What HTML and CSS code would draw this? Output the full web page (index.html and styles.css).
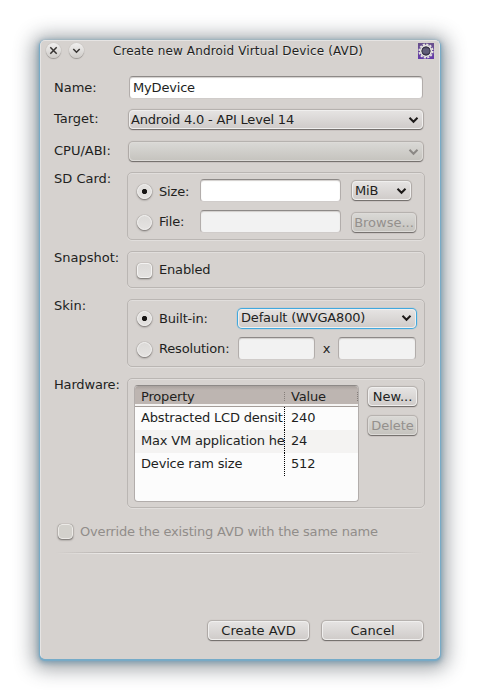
FILE: index.html
```html
<!DOCTYPE html>
<html lang="en">
<head>
<meta charset="utf-8">
<title>Create new Android Virtual Device (AVD)</title>
<link rel="stylesheet" href="styles.css">
</head>
<body>
<main class="dialog">
  <header class="titlebar">
    <span class="round"><svg width="15" height="15" viewBox="0 0 15 15"><path d="M4.3 4.3l6.4 6.4M10.7 4.3l-6.4 6.4"/></svg></span>
    <span class="round"><svg width="15" height="15" viewBox="0 0 15 15"><path d="M4.3 6l3.2 3.2L10.7 6"/></svg></span>
    <h1>Create new Android Virtual Device (AVD)</h1>
    <svg class="app" width="16" height="16" viewBox="0 0 16 16">
      <defs><linearGradient id="bg" x2="0" y2="1"><stop stop-color="#68518b"/><stop offset="1" stop-color="#653baa"/></linearGradient></defs>
      <rect width="16" height="16" fill="url(#bg)"/>
      <circle cx="8" cy="8" r="6.7" fill="none" stroke="#e4e2e0" stroke-width="1.8" stroke-dasharray="2.2 1.308"/>
      <circle cx="8" cy="8" r="5.3" fill="#3a364e" stroke="#e4e2e0" stroke-width="1.7"/>
      <circle cx="8" cy="8" r="4" fill="#57516f" stroke="#353144" stroke-width="1"/>
      <path d="M4.5 7h7M4.5 9h7" stroke="#77738e" stroke-width=".7"/>
    </svg>
  </header>
  <section class="form">
    <div class="row name"><label>Name:</label><div class="input">MyDevice</div></div>
    <div class="row target"><label>Target:</label><div class="button combo"><span>Android 4.0 - API Level 14</span><svg class="arrow" width="11" height="8" viewBox="0 0 11 8"><path d="M1.5 1.8l4 4 4-4"/></svg></div></div>
    <div class="row cpu"><label>CPU/ABI:</label><div class="button combo off"><span></span><svg class="arrow" width="11" height="8" viewBox="0 0 11 8"><path d="M1.5 1.8l4 4 4-4"/></svg></div></div>
    <div class="row sd"><label>SD Card:</label>
      <div class="group">
        <div class="line"><i class="radio on"></i><span class="opt">Size:</span><div class="input"></div><div class="button combo mib"><span>MiB</span><svg class="arrow" width="11" height="8" viewBox="0 0 11 8"><path d="M1.5 1.8l4 4 4-4"/></svg></div></div>
        <div class="line"><i class="radio"></i><span class="opt">File:</span><div class="input dim"></div><div class="button off browse">Browse...</div></div>
      </div>
    </div>
    <div class="row snap"><label>Snapshot:</label><div class="group"><i class="check"></i><span class="opt">Enabled</span></div></div>
    <div class="row skin"><label>Skin:</label>
      <div class="group">
        <div class="line"><i class="radio on"></i><span class="opt">Built-in:</span><div class="button combo focus"><span>Default (WVGA800)</span><svg class="arrow" width="11" height="8" viewBox="0 0 11 8"><path d="M1.5 1.8l4 4 4-4"/></svg></div></div>
        <div class="line"><i class="radio"></i><span class="opt">Resolution:</span><div class="input dim"></div><span class="times">x</span><div class="input dim wide"></div></div>
      </div>
    </div>
    <div class="row hw"><label>Hardware:</label>
      <div class="group">
        <div class="table">
          <div class="tr head"><span>Property</span><span>Value</span></div>
          <div class="tr"><span>Abstracted LCD densit</span><span>240</span></div>
          <div class="tr alt"><span>Max VM application he</span><span>24</span></div>
          <div class="tr"><span>Device ram size</span><span>512</span></div>
        </div>
        <div class="actions"><div class="button">New...</div><div class="button off">Delete</div></div>
      </div>
    </div>
    <div class="override"><i class="check dim"></i><span>Override the existing AVD with the same name</span></div>
    <div class="separator"></div>
    <footer><div class="button create">Create AVD</div><div class="button">Cancel</div></footer>
  </section>
</main>
</body>
</html>
```
FILE: styles.css
```css
* { box-sizing: border-box; }
body {
  margin: 0;
  padding: 40px;
  height: 699px;
  overflow: hidden;
  background: #fff;
  color: #221f1e;
  font: 13px/18px "DejaVu Sans", sans-serif;
  letter-spacing: -.18px;
  white-space: nowrap;
}
.dialog {
  width: 400px;
  height: 619px;
  background: #d6d2cf;
  border-radius: 5px;
  border: 1px solid #e6e4e3;
  border-bottom-color: #d6d2cf;
  box-shadow: 0 1px 1px 1px #76abc8, 0 2px 5px 2px rgba(100, 145, 172, .6), 0 3px 19px 7px rgba(55, 62, 72, .48);
}
.titlebar {
  display: flex;
  align-items: center;
  height: 20px;
  padding: 0 5px;
}
.round {
  width: 15px;
  height: 15px;
  margin: -2px 8px 0 0;
  border-radius: 50%;
  background: linear-gradient(#f0efee, #cfccc9);
  box-shadow: 0 1px 1px #9a9693, 0 0 1px #a8a4a1;
}
.round svg { display: block; fill: none; stroke: #373432; stroke-width: 1.5; }
h1 {
  flex: 1;
  margin: 0 0 0 21px;
  font-size: 12px;
  font-weight: normal;
  letter-spacing: .14px;
  text-shadow: 0 1px #eceae8;
}
.form { padding: 15px 14px 0 13px; }
.row { display: grid; grid-template-columns: 73px 298px; height: 23px; }
.row > label { line-height: 24px; letter-spacing: 0; }
.row > .input { margin: 0 2px; }
.row > .combo { margin: 0 2px; padding: 0 3px 0 1px; }
.target { margin-top: 11px; height: 20px; }
.cpu { margin-top: 12px; height: 20px; }
.target > label, .cpu > label { line-height: 18px; }
.sd { margin-top: 10px; height: 68px; }
.snap { margin-top: 11px; height: 37px; }
.skin { margin-top: 11px; height: 68px; }
.hw { margin-top: 11px; height: 130px; }
.sd > label, .snap > label, .skin > label, .hw > label { line-height: 14px; }
.hw > label { letter-spacing: -.17px; }
.group {
  border: 1px solid #bab6b3;
  border-radius: 5px;
  box-shadow: inset 0 1px #e1dedc, 0 1px #e1dedc;
  padding: 6px 7px 0 9px;
}
.line { display: flex; height: 23px; align-items: center; }
.line + .line { margin-top: 8px; }
.opt { margin-left: 7px; }
.radio, .check {
  flex: none;
  width: 15px;
  height: 15px;
  margin-top: 2px;
  background: linear-gradient(#dcdad8, #e4e2e0);
  border: 1px solid #f4f3f2;
  box-shadow: 0 1px 2px #6f6b68, 0 0 1px #8d8986;
}
.radio { border-radius: 50%; }
.radio.on { background: radial-gradient(circle at 50% 50%, #171514 2.2px, #e2e0de 3px); }
.check { border-radius: 4px; }
.check.dim { margin-top: 1px; background: #d3d1cc; border-color: #eceae7; }
.input {
  height: 23px;
  padding: 0 3px;
  line-height: 22px;
  background: #fff;
  border: 1px solid #b2adab;
  border-top-color: #8d8987;
  border-bottom-color: #d0ccca;
  border-radius: 4px;
  box-shadow: inset 0 1px 1px #d2cfcd;
}
.input.dim { background: #f2f2f2; }
.button {
  height: 19px;
  border: 1px solid #f0efee;
  border-radius: 4px;
  background: linear-gradient(#e5e3e2, #d0ccca);
  box-shadow: 0 1px 1px #6f6b69, 0 0 1px 1px #b3aeab;
  line-height: 18px;
  text-align: center;
}
.off { color: #94908d; background: linear-gradient(#d9d8d5, #c6c4bf); border-color: #dddbd8; }
.combo { display: flex; align-items: center; padding: 0 3px 0 2px; }
.combo span { flex: 1; text-align: left; }
.arrow { fill: none; stroke: #1d1a19; stroke-width: 2; }
.off .arrow { stroke: #8b8885; }
.line .opt { position: relative; top: 1px; }
.line + .line .opt { top: 0; }
.sd .opt { width: 41px; }
.sd .input { width: 141px; }
.mib { width: 59px; margin-left: 11px; }
.browse { width: 64px; margin: 1px 0 0 11px; letter-spacing: 0; }
.snap .group { display: flex; padding-top: 9px; }
.skin .opt { width: 79px; }
.focus { width: 178px; margin-top: 1px; box-shadow: 0 0 1px 1px #31a4df; }
.skin .input { width: 77px; }
.skin .input.wide { width: 78px; }
.times { width: 23px; text-align: center; }
.hw .group { display: flex; padding: 6px 7px 0 6px; }
.table {
  width: 225px;
  height: 117px;
  overflow: hidden;
  background: #fcfcfc;
  border: 1px solid #b2adab;
  border-top-color: #8d8987;
  border-radius: 4px;
}
.tr { display: flex; height: 23px; line-height: 22px; }
.tr.alt { background: #f4f3f2; }
.tr span { padding-left: 6px; }
.tr span:first-child { width: 150px; border-right: 1px dotted #000; }
.tr.head {
  height: 21px;
  line-height: 21px;
  background: linear-gradient(#a8a19d, #bdb5b1 4px, #bdb5b1 18px, #f6f5f4 18px);
  border-bottom: 1px solid #a49d99;
}
.tr.head span { height: 9px; margin-top: 6px; line-height: 9px; border-right: 1px dotted #857e7a; }
.head span:last-child { width: 73px; }
.actions { padding: 2px 0 0 9px; }
.actions .button { width: 49px; margin-bottom: 10px; letter-spacing: 0; }
.override { display: flex; height: 17px; margin: 15px 0 0 4px; line-height: 17px; color: #918d8a; }
.override span { margin-left: 7px; }
.separator {
  height: 2px;
  margin: 12px 2px 0;
  background: linear-gradient(90deg, #d6d2cf, transparent 20%, transparent 80%, #d6d2cf), linear-gradient(#aaa5a2 50%, #f4f3f2 50%);
}
footer { display: flex; gap: 13px; justify-content: flex-end; margin: 67px 2px 0 0; }
footer .button { width: 101px; letter-spacing: 0; }
```
